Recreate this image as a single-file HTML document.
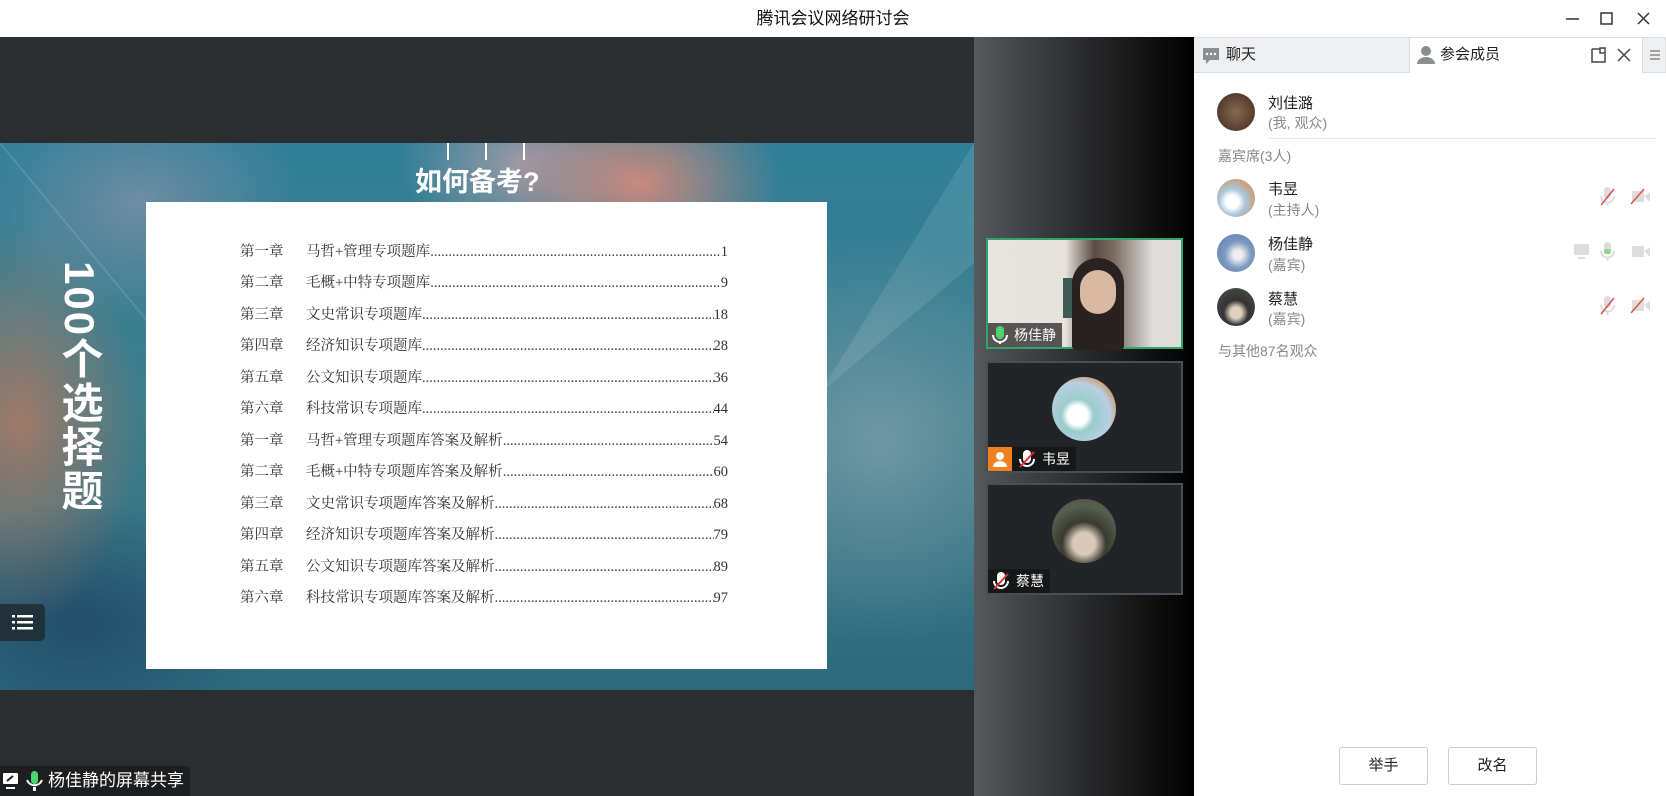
<!DOCTYPE html>
<html><head><meta charset="utf-8"><style>
*{margin:0;padding:0;box-sizing:border-box}
body{width:1666px;height:796px;overflow:hidden;position:relative;background:#2a2d30;font-family:"Liberation Sans","Noto Sans CJK SC",sans-serif}
.abs{position:absolute}
#title{left:0;top:0;width:1666px;height:37px;background:#fff;text-align:center;line-height:38px;font-size:17px;color:#111}
#main{left:0;top:37px;width:974px;height:759px;background:#2b2e31}
#slide{left:0;top:143px;width:974px;height:547px;overflow:hidden;
background:
radial-gradient(ellipse 120px 200px at 20px 280px,rgba(200,120,90,.7),transparent),
radial-gradient(ellipse 160px 120px at 140px 60px,rgba(150,150,170,.6),transparent),
radial-gradient(ellipse 140px 100px at 640px 40px,rgba(240,140,120,.8),transparent),
radial-gradient(ellipse 120px 90px at 520px 20px,rgba(180,160,170,.8),transparent),
radial-gradient(ellipse 200px 200px at 880px 300px,rgba(140,170,180,.6),transparent),
radial-gradient(ellipse 200px 120px at 80px 480px,rgba(30,70,100,.8),transparent),
linear-gradient(180deg,#2f7f98 0%,#3f7d8a 50%,#2d6a7c 100%)}
#page{left:146px;top:59px;width:681px;height:467px;background:#fff}
.row{position:absolute;left:94px;width:488px;font-family:"Liberation Serif","Noto Serif CJK SC",serif;font-size:14.5px;line-height:20px;color:#333;display:flex;align-items:baseline;white-space:nowrap}
.row .c{width:66px;flex:none}
.row .d{flex:1;min-width:0;overflow:hidden}
.row .n{flex:none}
.row .d::after{content:"....................................................................................................................................................";color:#444}
#panel{left:1194px;top:37px;width:472px;height:759px;background:#fff}
.tab{position:absolute;top:0;height:36px;font-size:15px;color:#222;line-height:36px}
.av{position:absolute;width:38px;height:38px;border-radius:50%}
.nm{position:absolute;font-size:15px;color:#222}
.sb{position:absolute;font-size:14px;color:#888}
.btn{position:absolute;top:747px;width:89px;height:38px;border:1px solid #ccc;border-radius:3px;font-size:15px;text-align:center;line-height:36px;color:#222;background:#fff}
.th{position:absolute;left:986px;width:197px;border:2px solid #4a4d52;background:#222427}
.lbl{position:absolute;left:0;bottom:0;height:24px;background:rgba(20,20,20,.8);color:#fff;font-size:14px;line-height:24px;padding:0 6px 0 4px;display:flex;align-items:center;gap:6px}
</style></head><body>
<div id="title" class="abs">腾讯会议网络研讨会</div>
<svg class="abs" style="left:1560px;top:10px" width="100" height="18"><path d="M6 9h13" stroke="#333" stroke-width="1.5"/><rect x="41" y="3" width="11" height="11" fill="none" stroke="#333" stroke-width="1.5"/><path d="M78 3l11 11M89 3l-11 11" stroke="#333" stroke-width="1.5"/></svg>
<div id="main" class="abs"></div>
<div id="slide" class="abs">
 <svg class="abs" style="left:0;top:0" width="974" height="547"><polygon points="0,0 0,0 230,280" fill="rgba(255,255,255,.08)"/><polygon points="974,0 974,120 820,250" fill="rgba(255,255,255,.1)"/><path d="M0 0 L240 290" stroke="rgba(255,255,255,.12)" stroke-width="2"/></svg>
 <div class="abs" style="left:447px;top:0;width:2px;height:17px;background:#fff"></div>
 <div class="abs" style="left:485px;top:0;width:2px;height:17px;background:#fff"></div>
 <div class="abs" style="left:523px;top:0;width:2px;height:17px;background:#fff"></div>
 <div class="abs" style="left:415px;top:17px;font-size:27px;font-weight:bold;color:#fff">如何备考?</div>
 <div class="abs" style="left:56px;top:118px;writing-mode:vertical-rl;font-size:42px;font-weight:bold;color:#fff;line-height:46px;letter-spacing:2px">100个选择题</div>
 <div id="page" class="abs">
  <div class="row" style="top:40px"><span class="c">第一章</span><span class="d">马哲+管理专项题库</span><span class="n">1</span></div>
  <div class="row" style="top:71px"><span class="c">第二章</span><span class="d">毛概+中特专项题库</span><span class="n">9</span></div>
  <div class="row" style="top:103px"><span class="c">第三章</span><span class="d">文史常识专项题库</span><span class="n">18</span></div>
  <div class="row" style="top:134px"><span class="c">第四章</span><span class="d">经济知识专项题库</span><span class="n">28</span></div>
  <div class="row" style="top:166px"><span class="c">第五章</span><span class="d">公文知识专项题库</span><span class="n">36</span></div>
  <div class="row" style="top:197px"><span class="c">第六章</span><span class="d">科技常识专项题库</span><span class="n">44</span></div>
  <div class="row" style="top:229px"><span class="c">第一章</span><span class="d">马哲+管理专项题库答案及解析</span><span class="n">54</span></div>
  <div class="row" style="top:260px"><span class="c">第二章</span><span class="d">毛概+中特专项题库答案及解析</span><span class="n">60</span></div>
  <div class="row" style="top:292px"><span class="c">第三章</span><span class="d">文史常识专项题库答案及解析</span><span class="n">68</span></div>
  <div class="row" style="top:323px"><span class="c">第四章</span><span class="d">经济知识专项题库答案及解析</span><span class="n">79</span></div>
  <div class="row" style="top:355px"><span class="c">第五章</span><span class="d">公文知识专项题库答案及解析</span><span class="n">89</span></div>
  <div class="row" style="top:386px"><span class="c">第六章</span><span class="d">科技常识专项题库答案及解析</span><span class="n">97</span></div>
 </div>
 <div class="abs" style="left:0;top:461px;width:45px;height:37px;background:rgba(30,40,45,.8);border-radius:0 5px 5px 0">
  <svg width="45" height="37"><g fill="#fff"><rect x="12" y="11" width="3" height="2.5"/><rect x="17" y="11" width="16" height="2.5"/><rect x="12" y="17" width="3" height="2.5"/><rect x="17" y="17" width="16" height="2.5"/><rect x="12" y="23" width="3" height="2.5"/><rect x="17" y="23" width="16" height="2.5"/></g></svg>
 </div>
</div>
<div class="abs" style="left:0;top:766px;width:190px;height:30px;background:#1c1e20;border-radius:0 5px 0 0;color:#fff;font-size:17px;line-height:30px;padding-left:48px">杨佳静的屏幕共享</div>
<svg class="abs" style="left:2px;top:770px" width="44" height="24"><rect x="1" y="3" width="15" height="11" rx="1" fill="#fff"/><rect x="4" y="17" width="9" height="2" fill="#fff"/><path d="M5 11l6-5" stroke="#222" stroke-width="2"/><rect x="29" y="1" width="7" height="13" rx="3.5" fill="#4ad66d"/><path d="M25 10a8 8 0 0 0 15 0" stroke="#fff" stroke-width="2" fill="none"/><rect x="31" y="17" width="3" height="4" fill="#fff"/></svg>
<div class="abs" style="left:974px;top:37px;width:220px;height:759px;background:linear-gradient(90deg,#56595c 0%,#3a3c3f 30%,#111 80%,#000 100%)"></div>
<div class="th" style="top:238px;height:111px;border-color:#2ea56a;background:linear-gradient(90deg,#e8e4df 0%,#e6e2dc 40%,#5a4a44 55%,#7a6a60 65%,#ddd 85%,#e0ddd8 100%)">
 <div class="abs" style="left:75px;top:38px;width:60px;height:40px;background:#3e5a55"></div>
 <div class="abs" style="left:84px;top:18px;width:52px;height:92px;border-radius:26px 26px 4px 4px;background:#2a2220"></div>
 <div class="abs" style="left:92px;top:30px;width:36px;height:44px;border-radius:18px;background:#d8b8a0"></div>
 <div class="lbl" style="background:rgba(60,60,60,.85)"><svg width="16" height="20"><rect x="4" y="1" width="8" height="13" rx="4" fill="#4ad66d"/><path d="M1 10a7 7 0 0 0 14 0" stroke="#fff" stroke-width="2" fill="none"/><rect x="7" y="16" width="2" height="3" fill="#fff"/></svg>杨佳静</div>
</div>
<div class="th" style="top:361px;height:112px">
 <div class="av" style="left:64px;top:14px;width:64px;height:64px;background:radial-gradient(circle at 40% 60%,#fff 0 18%,#9cc 30%,#b9cfe3 60%,#c9a080 75%,#b8d0e8 100%)"></div>
 <div class="lbl" style="padding-left:0"><span style="width:24px;height:24px;background:#f08020;display:inline-block;position:relative"><svg width="24" height="24"><circle cx="12" cy="9" r="4" fill="#fff"/><path d="M5 20a7 6 0 0 1 14 0z" fill="#fff"/></svg></span><svg width="18" height="20"><rect x="5" y="1" width="8" height="13" rx="4" fill="#fff"/><path d="M2 10a7 7 0 0 0 14 0" stroke="#fff" stroke-width="2" fill="none"/><path d="M2 18L16 3" stroke="#e03030" stroke-width="2"/></svg>韦昱</div>
</div>
<div class="th" style="top:483px;height:112px">
 <div class="av" style="left:64px;top:14px;width:64px;height:64px;background:radial-gradient(circle at 50% 70%,#d9c9b8 0 20%,#3a3a30 40%,#556050 70%,#4a5048 100%)"></div>
 <div class="lbl"><svg width="18" height="20"><rect x="5" y="1" width="8" height="13" rx="4" fill="#fff"/><path d="M2 10a7 7 0 0 0 14 0" stroke="#fff" stroke-width="2" fill="none"/><path d="M2 18L16 3" stroke="#e03030" stroke-width="2"/></svg>蔡慧</div>
</div>
<div id="panel" class="abs">
 <div class="abs" style="left:0;top:0;width:215px;height:36px;background:#eeeff1;border-bottom:1px solid #ddd;border-top:1px solid #ddd"></div>
 <div class="abs" style="left:215px;top:0;width:234px;height:36px;background:#fff;border-top:1px solid #ddd;border-left:1px solid #ddd"></div>
 <div class="abs" style="left:448px;top:0;width:24px;height:36px;background:#eeeff1;border:1px solid #ddd"></div>
 <svg class="abs" style="left:7px;top:9px" width="20" height="20"><path d="M2 2h16v12h-9l-4 4v-4h-3z" fill="#8a8d92"/><g fill="#fff"><circle cx="6" cy="8" r="1.2"/><circle cx="10" cy="8" r="1.2"/><circle cx="14" cy="8" r="1.2"/></g></svg>
 <div class="tab" style="left:32px">聊天</div>
 <svg class="abs" style="left:221px;top:8px" width="22" height="20"><circle cx="11" cy="6" r="5" fill="#8a8d92"/><path d="M2 19a9 7 0 0 1 18 0z" fill="#8a8d92"/></svg>
 <div class="tab" style="left:246px">参会成员</div>
 <svg class="abs" style="left:396px;top:9px" width="50" height="18"><path d="M2 3h8M2 3v13h13v-8" stroke="#444" stroke-width="1.5" fill="none"/><rect x="10" y="2" width="5" height="5" fill="none" stroke="#444" stroke-width="1.5"/><path d="M28 3l12 12M40 3l-12 12" stroke="#444" stroke-width="1.5"/></svg>
 <svg class="abs" style="left:454px;top:11px" width="14" height="14"><path d="M2 3h10M2 7h10M2 11h10" stroke="#888" stroke-width="1.5"/></svg>
 <div class="av" style="left:23px;top:56px;background:radial-gradient(circle at 50% 50%,#8a6a50,#3a2820)"></div>
 <div class="nm" style="left:74px;top:55px">刘佳潞</div><div class="sb" style="left:74px;top:76px">(我, 观众)</div>
 <div class="abs" style="left:74px;top:101px;width:388px;height:1px;background:#e5e5e5"></div>
 <div class="sb" style="left:24px;top:109px">嘉宾席(3人)</div>
 <div class="av" style="left:23px;top:142px;background:radial-gradient(circle at 40% 60%,#fff 0 20%,#a8c8e0 40%,#c9a080 70%,#b0cce0)"></div>
 <div class="nm" style="left:74px;top:141px">韦昱</div><div class="sb" style="left:74px;top:163px">(主持人)</div>
 <div class="av" style="left:23px;top:197px;background:radial-gradient(circle at 55% 55%,#eee 0 15%,#7d9ac0 45%,#5a7aa8)"></div>
 <div class="nm" style="left:74px;top:196px">杨佳静</div><div class="sb" style="left:74px;top:218px">(嘉宾)</div>
 <div class="av" style="left:23px;top:251px;background:radial-gradient(circle at 50% 65%,#e0d0c0 0 18%,#333 40%,#4a5548)"></div>
 <div class="nm" style="left:74px;top:251px">蔡慧</div><div class="sb" style="left:74px;top:272px">(嘉宾)</div>
 <div class="sb" style="left:24px;top:304px">与其他87名观众</div>
 <svg class="abs" style="left:400px;top:148px" width="60" height="24"><rect x="10" y="2" width="7" height="12" rx="3.5" fill="#ddd"/><path d="M7 11a6.5 6.5 0 0 0 13 0" stroke="#ddd" stroke-width="2" fill="none"/><rect x="12.5" y="17" width="2" height="4" fill="#ddd"/><path d="M7 20L20 4" stroke="#e05050" stroke-width="1.5"/><rect x="38" y="6" width="12" height="11" fill="#ddd"/><path d="M50 11l6-4v10z" fill="#ddd"/><path d="M37 19L50 4" stroke="#e05050" stroke-width="1.5"/></svg>
 <svg class="abs" style="left:370px;top:203px" width="90" height="24"><rect x="10" y="4" width="15" height="11" rx="1" fill="#ddd"/><rect x="14" y="17" width="7" height="2" fill="#ddd"/><rect x="40" y="2" width="7" height="12" rx="3.5" fill="#ddd"/><rect x="40" y="9" width="7" height="5" rx="2" fill="#8ed88e"/><path d="M37 11a6.5 6.5 0 0 0 13 0" stroke="#ddd" stroke-width="2" fill="none"/><rect x="42.5" y="17" width="2" height="4" fill="#ddd"/><rect x="68" y="6" width="12" height="11" fill="#ddd"/><path d="M80 11l6-4v10z" fill="#ddd"/></svg>
 <svg class="abs" style="left:400px;top:257px" width="60" height="24"><rect x="10" y="2" width="7" height="12" rx="3.5" fill="#ddd"/><path d="M7 11a6.5 6.5 0 0 0 13 0" stroke="#ddd" stroke-width="2" fill="none"/><rect x="12.5" y="17" width="2" height="4" fill="#ddd"/><path d="M7 20L20 4" stroke="#e05050" stroke-width="1.5"/><rect x="38" y="6" width="12" height="11" fill="#ddd"/><path d="M50 11l6-4v10z" fill="#ddd"/><path d="M37 19L50 4" stroke="#e05050" stroke-width="1.5"/></svg>
</div>
<div class="btn" style="left:1339px">举手</div>
<div class="btn" style="left:1448px">改名</div>
</body></html>
